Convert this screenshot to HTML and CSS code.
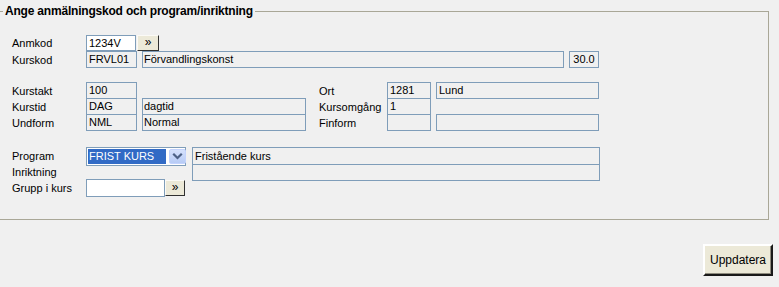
FILE: index.html
```html
<!DOCTYPE html>
<html lang="sv">
<head>
<meta charset="utf-8">
<title>Ange anmälningskod</title>
<link rel="stylesheet" href="styles.css">
</head>
<body>
<fieldset class="group">
  <legend>Ange anmälningskod och program/inriktning</legend>
  <div class="content">
    <div class="row r-anm">
      <span class="lbl">Anmkod</span>
      <input class="in code" type="text" value="1234V">
      <button class="go" type="button">»</button>
    </div>
    <div class="row r-kod">
      <span class="lbl">Kurskod</span>
      <div class="fld code">FRVL01</div>
      <div class="fld wide">Förvandlingskonst</div>
      <div class="fld pts">30.0</div>
    </div>

    <div class="info">
      <div class="row r-info">
        <span class="lbl">Kurstakt</span>
        <div class="fld code">100</div>
        <div class="blank desc"></div>
        <span class="rlbl">Ort</span>
        <div class="fld rcode">1281</div>
        <div class="fld rdesc">Lund</div>
      </div>
      <div class="row r-info">
        <span class="lbl">Kurstid</span>
        <div class="fld code">DAG</div>
        <div class="fld desc">dagtid</div>
        <span class="rlbl">Kursomgång</span>
        <div class="fld rcode">1</div>
        <div class="blank rdesc"></div>
      </div>
      <div class="row r-info">
        <span class="lbl">Undform</span>
        <div class="fld code">NML</div>
        <div class="fld desc">Normal</div>
        <span class="rlbl">Finform</span>
        <div class="fld rcode"></div>
        <div class="fld rdesc"></div>
      </div>
    </div>

    <div class="prog">
      <div class="lblcol">
        <div>Program</div>
        <div>Inriktning</div>
        <div>Grupp i kurs</div>
      </div>
      <div class="ctlcol">
        <div class="combo">
          <span class="sel">FRIST KURS</span>
          <span class="drop">
            <svg width="15" height="15" viewBox="0 0 15 15"><path d="M4 5.5 L7.5 9 L11 5.5" fill="none" stroke="#4d6185" stroke-width="2.2" stroke-linecap="square"/></svg>
          </span>
        </div>
        <div class="grp">
          <input class="in grpin" type="text" value="">
          <button class="go go2" type="button">»</button>
        </div>
      </div>
      <div class="pdesc">
        <div class="fld p1">Fristående kurs</div>
        <div class="fld p2"></div>
      </div>
    </div>
  </div>
</fieldset>
<div class="actions">
  <button class="btn" type="button">Uppdatera</button>
</div>
</body>
</html>
```

FILE: styles.css
```css
* { box-sizing: border-box; }

html, body {
  margin: 0;
  padding: 0;
}

body {
  width: 779px;
  height: 287px;
  overflow: hidden;
  background: #f0f0f0;
  color: #000;
  font-family: "Liberation Sans", Arial, sans-serif;
  font-size: 11px;
}

.group {
  margin: 5px 10px 0 0;
  padding: 0;
  min-width: 0;
  border: 1px solid #a9a797;
  border-left: none;
}

.group legend {
  margin-left: 3px;
  padding: 0 2px;
  font-size: 12px;
  font-weight: bold;
  line-height: 13px;
  letter-spacing: -0.2px;
}

.content {
  padding: 17px 0 22px 12px;
}

.row {
  display: flex;
  align-items: stretch;
}

.lbl {
  width: 74px;
  flex: none;
  display: flex;
  align-items: center;
}

.rlbl {
  width: 68px;
  margin-left: 13px;
  flex: none;
  display: flex;
  align-items: center;
}

.r-anm { height: 16px; }
.r-kod { height: 17px; }

.fld {
  border: 1px solid #7f9db9;
  background: #f0f0f0;
  padding: 0 2px;
  line-height: 15px;
  white-space: nowrap;
  overflow: hidden;
  flex: none;
}

.blank { flex: none; }

.code { width: 51px; }
.wide { width: 422px; margin-left: 5px; padding-left: 1px; }
.pts { width: 30px; margin-left: 5px; text-align: center; padding: 0; }

.desc { width: 164px; margin-left: 5px; padding-left: 1px; }
.rcode { width: 44px; }
.rdesc { width: 163px; margin-left: 5px; }

.in {
  font: inherit;
  margin: 0;
  padding: 0 2px;
  border: 1px solid #7f9db9;
  background: #fff;
  color: #000;
  outline: none;
  border-radius: 0;
}

.r-anm .in.code {
  height: 16px;
  width: 50px;
  line-height: 14px;
}

.go {
  font: 12px "Liberation Sans", Arial, sans-serif;
  margin: 0 0 0 1px;
  padding: 0 0 2px 0;
  width: 22px;
  height: 16px;
  background: #ece9d8;
  color: #000;
  border: 1px solid;
  border-color: #fbfaf6 #303030 #303030 #fbfaf6;
  border-radius: 0;
  line-height: 12px;
}

.info {
  margin-top: 14px;
}

.r-info { height: 17px; }
.r-info + .r-info { margin-top: -1px; }

.prog {
  display: flex;
  margin-top: 16px;
}

.lblcol {
  width: 74px;
  flex: none;
  padding-top: 1px;
  line-height: 16px;
}

.ctlcol {
  width: 100px;
  flex: none;
}

.combo {
  height: 19px;
  border: 1px solid #7f9db9;
  background: #fff;
  display: flex;
  align-items: stretch;
  padding: 1px;
}

.sel {
  width: 78px;
  flex: none;
  background: #316ac5;
  color: #fff;
  line-height: 15px;
  padding-left: 1px;
  white-space: nowrap;
  overflow: hidden;
}

.drop {
  margin-left: 3px;
  flex: 1;
  display: flex;
  align-items: center;
  justify-content: center;
  background: linear-gradient(#d5e1fc, #b7cbf5);
  border: 1px solid #c3d3fd;
  border-radius: 2px;
}

.drop svg { display: block; }

.grp {
  display: flex;
  margin-top: 13px;
  height: 18px;
}

.grpin {
  width: 79px;
  height: 18px;
}

.go2 {
  margin: 1px 0 0 0;
  width: 20px;
  height: 16px;
}

.pdesc {
  margin-left: 6px;
  width: 408px;
  flex: none;
}

.p1 { height: 18px; line-height: 16px; }
.p2 { height: 17px; margin-top: -1px; }

.actions {
  display: flex;
  justify-content: flex-end;
  margin-top: 24px;
  padding-right: 6px;
}

.btn {
  font: 12px "Liberation Sans", Arial, sans-serif;
  width: 70px;
  height: 32px;
  margin: 0;
  padding: 0;
  background: #ece9d8;
  color: #000;
  border: 2px solid;
  border-color: #fff #1a1a1a #1a1a1a #fff;
  box-shadow: inset -1px -1px 0 #8f8c7f;
  border-radius: 0;
}
```
